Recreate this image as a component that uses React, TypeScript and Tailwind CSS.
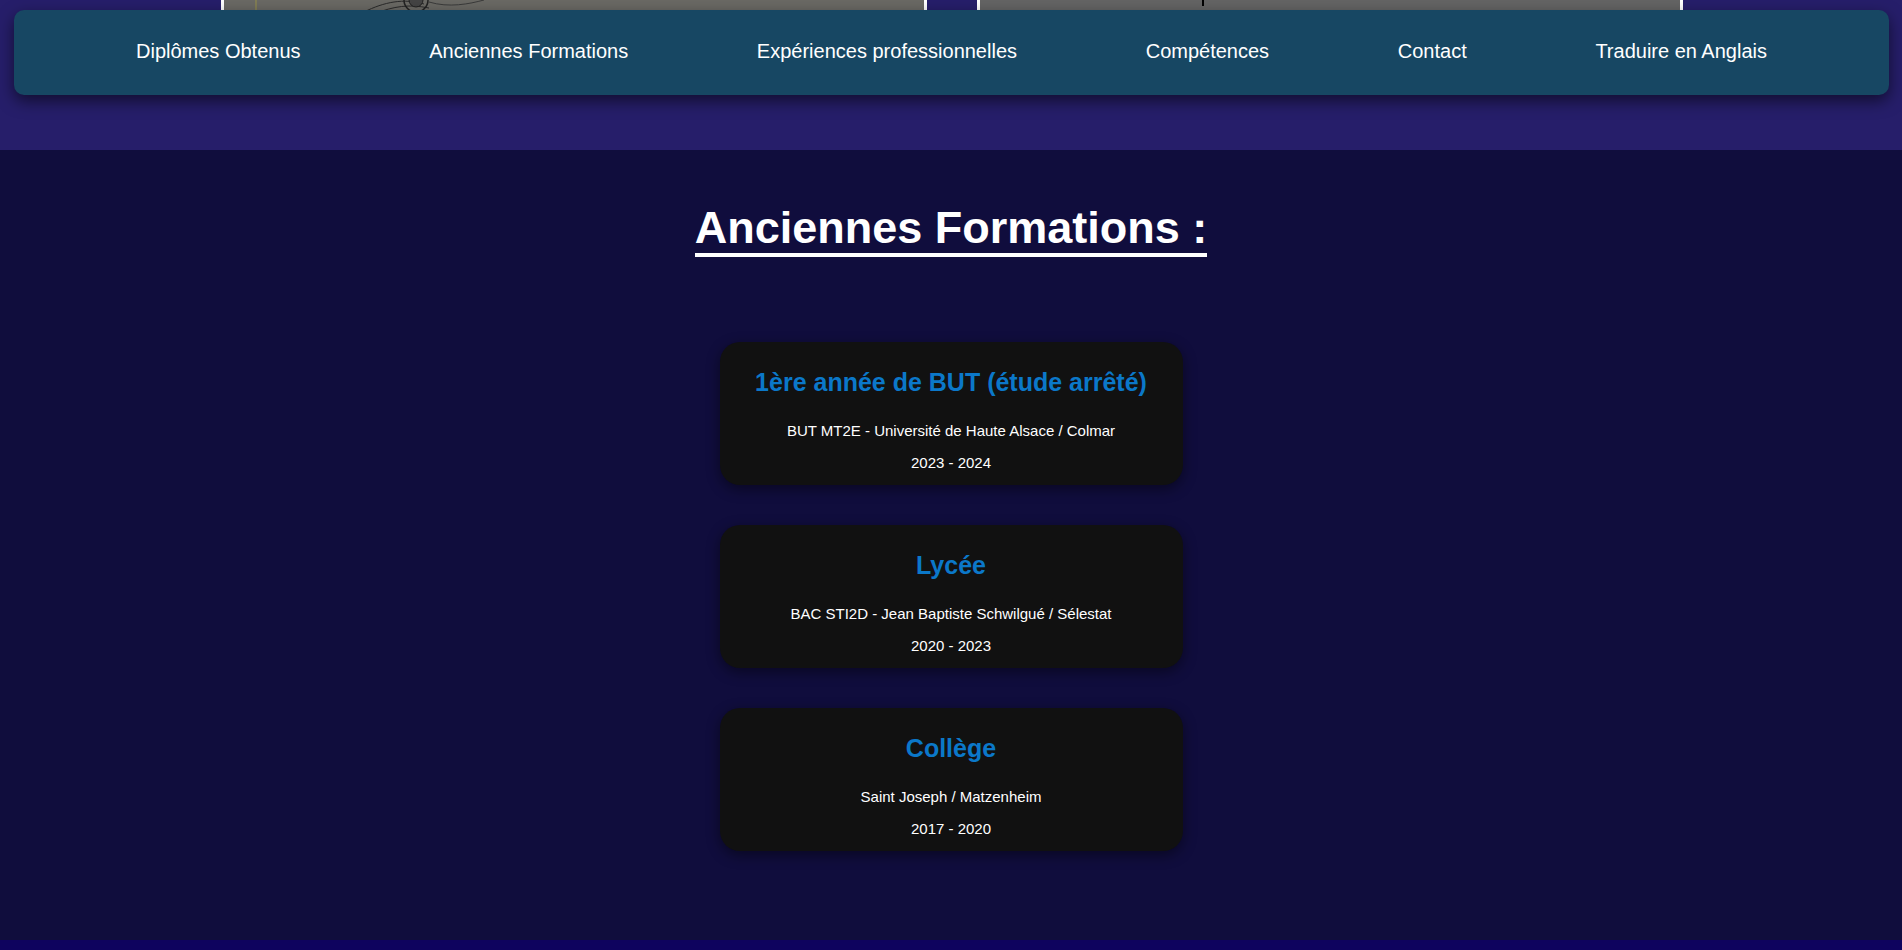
import React from 'react';

const links = [
  'Diplômes Obtenus',
  'Anciennes Formations',
  'Expériences professionnelles',
  'Compétences',
  'Contact',
  'Traduire en Anglais',
];

const formations = [
  {
    title: '1ère année de BUT (étude arrêté)',
    place: 'BUT MT2E - Université de Haute Alsace / Colmar',
    years: '2023 - 2024',
  },
  {
    title: 'Lycée',
    place: 'BAC STI2D - Jean Baptiste Schwilgué / Sélestat',
    years: '2020 - 2023',
  },
  {
    title: 'Collège',
    place: 'Saint Joseph / Matzenheim',
    years: '2017 - 2020',
  },
];

const Navbar = () => (
  <nav className="absolute top-[10px] left-[14px] right-[13px] h-[85px] rounded-[10px] bg-[#174763] shadow-[0_6px_16px_rgba(0,0,0,0.55)] flex items-center justify-between px-[122px] pb-[2px] z-10">
    {links.map((name) => (
      <a key={name} href="#" className="text-white text-[20px] leading-[normal]">
        {name}
      </a>
    ))}
  </nav>
);

const Card = ({ title, place, years }: { title: string; place: string; years: string }) => (
  <div className="w-[463px] rounded-[20px] bg-[#111111] shadow-[0_4px_14px_rgba(0,0,0,0.45)] flex flex-col items-center text-center pt-[26px] pb-[14px]">
    <h3 className="text-[25px] font-bold leading-[normal] text-[#0b78c9] mb-[25px]">{title}</h3>
    <p className="text-[15px] leading-[normal] text-white">{place}</p>
    <p className="text-[15px] leading-[normal] text-white mt-[15px]">{years}</p>
  </div>
);

export default function App() {
  return (
    <div className="relative min-h-screen bg-[#0e035e] font-['Liberation_Sans',Arial,sans-serif]">
      {/* top band, scrolled so only the bottom of the photos shows */}
      <header className="h-[150px] bg-[#261e6a] overflow-hidden">
        <div className="flex justify-center gap-[50px] pl-[2px]">
          <div className="relative w-[706px] h-[40px] border-x-[3px] border-b-[3px] border-white bg-[#6a6964] overflow-hidden">
            <svg className="absolute inset-0" width="700" height="40" viewBox="0 0 700 40">
              <line x1="32" y1="0" x2="32" y2="40" stroke="#8a8450" strokeWidth="1.5" />
              <path d="M140 12 C160 2 180 -2 200 4" stroke="#2a2a2a" fill="none" strokeWidth="1" />
              <path d="M150 14 C170 6 185 4 205 8" stroke="#2a2a2a" fill="none" strokeWidth="1" />
              <circle cx="192" cy="0" r="12" stroke="#222" fill="none" strokeWidth="1.5" />
              <circle cx="192" cy="0" r="7" stroke="#222" fill="#444" strokeWidth="1" />
              <path d="M205 2 C225 8 245 4 260 0" stroke="#3a3a3a" fill="none" strokeWidth="1" />
            </svg>
          </div>
          <div className="relative w-[706px] h-[40px] border-x-[3px] border-b-[3px] border-white bg-[#646464] overflow-hidden">
            <div className="absolute left-[222px] top-0 w-[2px] h-[6px] bg-black" />
          </div>
        </div>
      </header>

      <Navbar />

      <main className="bg-[#100d3d] pt-[53px] pb-[89px] flex flex-col items-center">
        <h2 className="text-white text-[45px] font-bold leading-[1.12] border-b-4 border-white">
          Anciennes Formations :
        </h2>
        <div className="mt-[85px] flex flex-col items-center gap-[40px]">
          {formations.map((f) => (
            <Card key={f.title} {...f} />
          ))}
        </div>
      </main>
    </div>
  );
}
